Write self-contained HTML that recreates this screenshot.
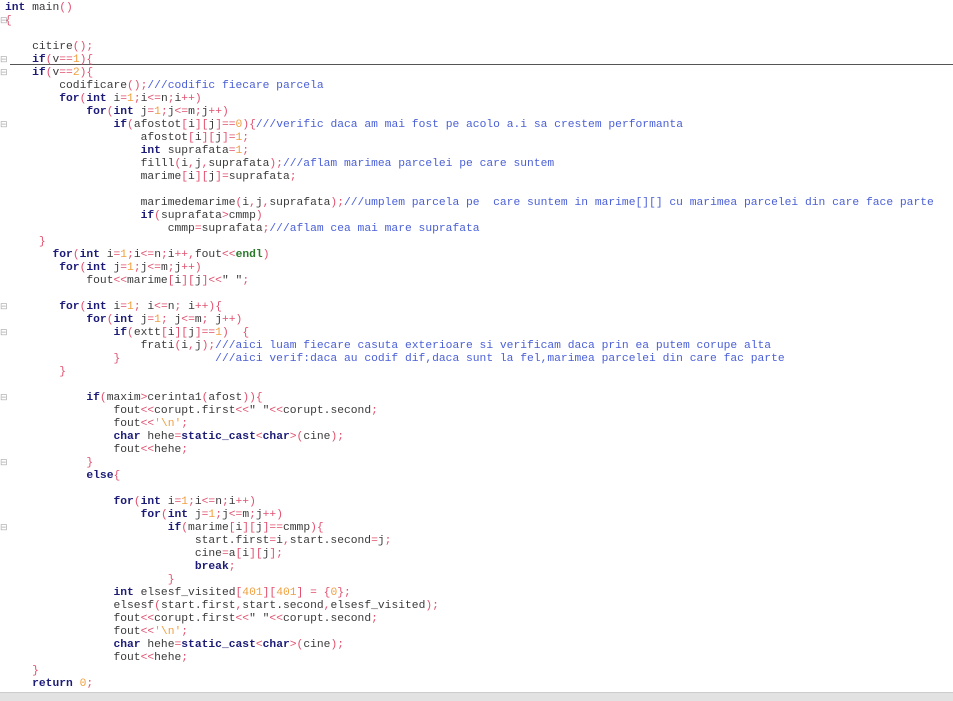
<!DOCTYPE html>
<html><head><meta charset="utf-8"><style>
html,body{margin:0;padding:0;background:#fff;width:953px;height:700px;overflow:hidden}
pre{margin:0;position:absolute;left:5px;top:2px;font-family:"Liberation Mono",monospace;font-size:11.3px;line-height:13px;color:#3a3a3a}
.k{color:#1c1c78;font-weight:bold}
.o{color:#e0506e}
.n{color:#f0a040}
.c{color:#4a5fd6}
.g{color:#2a7a2a;font-weight:bold}
.gut{position:absolute;left:0;font:9px "Liberation Mono",monospace;color:#aaa}
.hl{position:absolute;left:10px;right:0;top:64px;height:1px;background:#555}
.bot{position:absolute;left:0;right:0;top:692px;height:8px;background:#e2e2e2;border-top:1px solid #ccc}
</style></head><body>
<div class="hl"></div>
<div class="gut" style="top:16px">⊟</div>
<div class="gut" style="top:55px">⊟</div>
<div class="gut" style="top:68px">⊟</div>
<div class="gut" style="top:120px">⊟</div>
<div class="gut" style="top:302px">⊟</div>
<div class="gut" style="top:328px">⊟</div>
<div class="gut" style="top:393px">⊟</div>
<div class="gut" style="top:458px">⊟</div>
<div class="gut" style="top:523px">⊟</div>
<pre><span class="k">int</span> main<span class="o">()</span>
<span class="o">{</span>

    citire<span class="o">();</span>
    <span class="k">if</span><span class="o">(</span>v<span class="o">==</span><span class="n">1</span><span class="o">){</span>
    <span class="k">if</span><span class="o">(</span>v<span class="o">==</span><span class="n">2</span><span class="o">){</span>
        codificare<span class="o">();</span><span class="c">///codific fiecare parcela</span>
        <span class="k">for</span><span class="o">(</span><span class="k">int</span> i<span class="o">=</span><span class="n">1</span><span class="o">;</span>i<span class="o">&lt;=</span>n<span class="o">;</span>i<span class="o">++)</span>
            <span class="k">for</span><span class="o">(</span><span class="k">int</span> j<span class="o">=</span><span class="n">1</span><span class="o">;</span>j<span class="o">&lt;=</span>m<span class="o">;</span>j<span class="o">++)</span>
                <span class="k">if</span><span class="o">(</span>afostot<span class="o">[</span>i<span class="o">][</span>j<span class="o">]==</span><span class="n">0</span><span class="o">){</span><span class="c">///verific daca am mai fost pe acolo a.i sa crestem performanta</span>
                    afostot<span class="o">[</span>i<span class="o">][</span>j<span class="o">]=</span><span class="n">1</span><span class="o">;</span>
                    <span class="k">int</span> suprafata<span class="o">=</span><span class="n">1</span><span class="o">;</span>
                    filll<span class="o">(</span>i<span class="o">,</span>j<span class="o">,</span>suprafata<span class="o">);</span><span class="c">///aflam marimea parcelei pe care suntem</span>
                    marime<span class="o">[</span>i<span class="o">][</span>j<span class="o">]=</span>suprafata<span class="o">;</span>

                    marimedemarime<span class="o">(</span>i<span class="o">,</span>j<span class="o">,</span>suprafata<span class="o">);</span><span class="c">///umplem parcela pe  care suntem in marime[][] cu marimea parcelei din care face parte</span>
                    <span class="k">if</span><span class="o">(</span>suprafata<span class="o">&gt;</span>cmmp<span class="o">)</span>
                        cmmp<span class="o">=</span>suprafata<span class="o">;</span><span class="c">///aflam cea mai mare suprafata</span>
     <span class="o">}</span>
       <span class="k">for</span><span class="o">(</span><span class="k">int</span> i<span class="o">=</span><span class="n">1</span><span class="o">;</span>i<span class="o">&lt;=</span>n<span class="o">;</span>i<span class="o">++,</span>fout<span class="o">&lt;&lt;</span><span class="g">endl</span><span class="o">)</span>
        <span class="k">for</span><span class="o">(</span><span class="k">int</span> j<span class="o">=</span><span class="n">1</span><span class="o">;</span>j<span class="o">&lt;=</span>m<span class="o">;</span>j<span class="o">++)</span>
            fout<span class="o">&lt;&lt;</span>marime<span class="o">[</span>i<span class="o">][</span>j<span class="o">]&lt;&lt;</span>" "<span class="o">;</span>

        <span class="k">for</span><span class="o">(</span><span class="k">int</span> i<span class="o">=</span><span class="n">1</span><span class="o">;</span> i<span class="o">&lt;=</span>n<span class="o">;</span> i<span class="o">++){</span>
            <span class="k">for</span><span class="o">(</span><span class="k">int</span> j<span class="o">=</span><span class="n">1</span><span class="o">;</span> j<span class="o">&lt;=</span>m<span class="o">;</span> j<span class="o">++)</span>
                <span class="k">if</span><span class="o">(</span>extt<span class="o">[</span>i<span class="o">][</span>j<span class="o">]==</span><span class="n">1</span><span class="o">)</span>  <span class="o">{</span>
                    frati<span class="o">(</span>i<span class="o">,</span>j<span class="o">);</span><span class="c">///aici luam fiecare casuta exterioare si verificam daca prin ea putem corupe alta</span>
                <span class="o">}</span>              <span class="c">///aici verif:daca au codif dif,daca sunt la fel,marimea parcelei din care fac parte</span>
        <span class="o">}</span>

            <span class="k">if</span><span class="o">(</span>maxim<span class="o">&gt;</span>cerinta1<span class="o">(</span>afost<span class="o">)){</span>
                fout<span class="o">&lt;&lt;</span>corupt.first<span class="o">&lt;&lt;</span>" "<span class="o">&lt;&lt;</span>corupt.second<span class="o">;</span>
                fout<span class="o">&lt;&lt;</span><span class="n">'\n'</span><span class="o">;</span>
                <span class="k">char</span> hehe<span class="o">=</span><span class="k">static_cast</span><span class="o">&lt;</span><span class="k">char</span><span class="o">&gt;(</span>cine<span class="o">);</span>
                fout<span class="o">&lt;&lt;</span>hehe<span class="o">;</span>
            <span class="o">}</span>
            <span class="k">else</span><span class="o">{</span>

                <span class="k">for</span><span class="o">(</span><span class="k">int</span> i<span class="o">=</span><span class="n">1</span><span class="o">;</span>i<span class="o">&lt;=</span>n<span class="o">;</span>i<span class="o">++)</span>
                    <span class="k">for</span><span class="o">(</span><span class="k">int</span> j<span class="o">=</span><span class="n">1</span><span class="o">;</span>j<span class="o">&lt;=</span>m<span class="o">;</span>j<span class="o">++)</span>
                        <span class="k">if</span><span class="o">(</span>marime<span class="o">[</span>i<span class="o">][</span>j<span class="o">]==</span>cmmp<span class="o">){</span>
                            start.first<span class="o">=</span>i<span class="o">,</span>start.second<span class="o">=</span>j<span class="o">;</span>
                            cine<span class="o">=</span>a<span class="o">[</span>i<span class="o">][</span>j<span class="o">];</span>
                            <span class="k">break</span><span class="o">;</span>
                        <span class="o">}</span>
                <span class="k">int</span> elsesf_visited<span class="o">[</span><span class="n">401</span><span class="o">][</span><span class="n">401</span><span class="o">]</span> <span class="o">=</span> <span class="o">{</span><span class="n">0</span><span class="o">};</span>
                elsesf<span class="o">(</span>start.first<span class="o">,</span>start.second<span class="o">,</span>elsesf_visited<span class="o">);</span>
                fout<span class="o">&lt;&lt;</span>corupt.first<span class="o">&lt;&lt;</span>" "<span class="o">&lt;&lt;</span>corupt.second<span class="o">;</span>
                fout<span class="o">&lt;&lt;</span><span class="n">'\n'</span><span class="o">;</span>
                <span class="k">char</span> hehe<span class="o">=</span><span class="k">static_cast</span><span class="o">&lt;</span><span class="k">char</span><span class="o">&gt;(</span>cine<span class="o">);</span>
                fout<span class="o">&lt;&lt;</span>hehe<span class="o">;</span>
    <span class="o">}</span>
    <span class="k">return</span> <span class="n">0</span><span class="o">;</span></pre>
<div class="bot"></div>
</body></html>
